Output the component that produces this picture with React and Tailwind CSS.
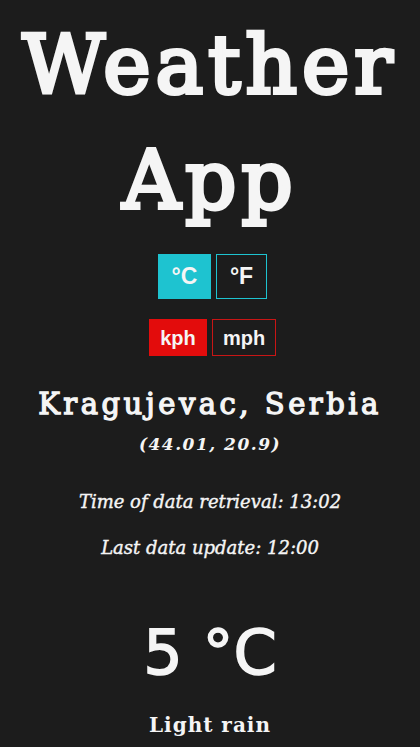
import { useState } from 'react';

export default function App() {
  const [unit, setUnit] = useState('C');
  const [speed, setSpeed] = useState('kph');

  return (
    <div className="min-h-screen bg-[#1c1c1c] text-[#f5f5f5] flex flex-col items-center font-['DejaVu_Serif',serif]">
      {/* Title */}
      <h1 className="mt-[8px] text-center text-[80px] leading-[115px] tracking-[5px] [-webkit-text-stroke:4px_#f5f5f5]">
        Weather
        <br />
        App
      </h1>

      {/* Temperature unit */}
      <div className="mt-[16px] pl-[5px] flex gap-[5px] font-['Liberation_Sans',sans-serif] font-bold">
        <button
          onClick={() => setUnit('C')}
          className={`w-[53px] h-[45px] text-[23px] border ${unit === 'C' ? 'bg-[#1ec3d0] border-[#1ec3d0]' : 'border-[#1ec3d0]'}`}
        >
          °C
        </button>
        <button
          onClick={() => setUnit('F')}
          className={`w-[51px] h-[45px] text-[23px] border ${unit === 'F' ? 'bg-[#1ec3d0] border-[#1ec3d0]' : 'border-[#1ec3d0]'}`}
        >
          °F
        </button>
      </div>

      {/* Speed unit */}
      <div className="mt-[20px] pl-[5px] flex gap-[5px] font-['Liberation_Sans',sans-serif] font-bold">
        <button
          onClick={() => setSpeed('kph')}
          className={`w-[58px] h-[37px] text-[20px] border ${speed === 'kph' ? 'bg-[#e30c0c] border-[#e30c0c]' : 'border-[#c81515]'}`}
        >
          kph
        </button>
        <button
          onClick={() => setSpeed('mph')}
          className={`w-[64px] h-[37px] text-[20px] border ${speed === 'mph' ? 'bg-[#e30c0c] border-[#e30c0c]' : 'border-[#c81515]'}`}
        >
          mph
        </button>
      </div>

      {/* Location */}
      <h2 className="mt-[30px] text-[29px] leading-[36px] tracking-[3.5px] [-webkit-text-stroke:1.3px_#f5f5f5]">Kragujevac, Serbia</h2>
      <p className="mt-[10px] text-[17px] italic font-bold tracking-[1.5px]">(44.01, 20.9)</p>

      <p className="mt-[30px] text-[18px] italic [-webkit-text-stroke:0.4px_#f5f5f5]">Time of data retrieval: 13:02</p>
      <p className="mt-[19px] text-[18px] italic [-webkit-text-stroke:0.4px_#f5f5f5]">Last data update: 12:00</p>

      {/* Current weather */}
      <p className="mt-[57px] text-[62px] leading-[70px] font-['DejaVu_Sans',sans-serif] [-webkit-text-stroke:1.5px_#f5f5f5]">5 °C</p>
      <p className="mt-[22px] text-[20px] font-bold tracking-[1px]">Light rain</p>
    </div>
  );
}
